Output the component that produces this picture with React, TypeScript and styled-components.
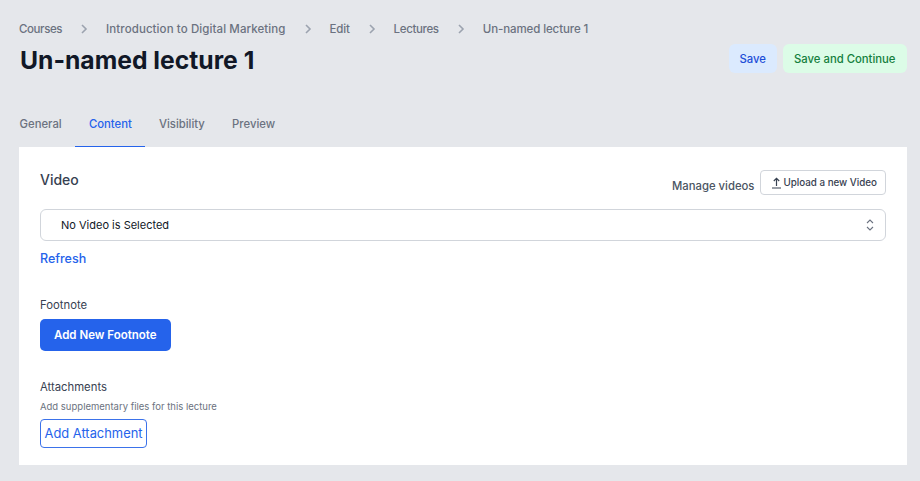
import React from 'react'
import styled, { createGlobalStyle } from 'styled-components'

const GlobalStyle = createGlobalStyle`
    html, body {
        margin: 0;
        padding: 0;
        background: #e5e7eb;
        font-family: Inter, "Noto Sans", sans-serif;
    }
    * { box-sizing: border-box; }
`

const Page = styled.div`
    width: 920px;
    height: 481px;
    overflow: hidden;
    padding: 20px 13px 0 19px;
    background: #e5e7eb;
`

const Header = styled.div`
    display: flex;
    justify-content: space-between;
    align-items: flex-start;
`

const Crumbs = styled.nav`
    display: flex;
    align-items: center;
    height: 17px;
    font-size: 11.5px;
    font-weight: 500;
    color: #6b7280;
`

const Crumb = styled.span<{ $track: number }>`
    white-space: nowrap;
    letter-spacing: ${p => p.$track}px;
`

const CrumbArrow = styled.svg`
    width: 10px;
    height: 10px;
    margin: 0 17px;
    fill: none;
    stroke: #9ca3af;
    stroke-width: 1.6;
`

const Title = styled.h1`
    margin: 7px 0 0 1px;
    font-size: 24.7px;
    line-height: 32px;
    font-weight: 700;
    color: #111827;
`

const Actions = styled.div`
    display: flex;
    gap: 6px;
    margin-top: 24px;
`

const ActionButton = styled.button<{ $tone: 'blue' | 'green' }>`
    height: 29px;
    padding: 0 ${p => (p.$tone === 'blue' ? '10.5px' : '11.5px')};
    border: 0;
    border-radius: 6px;
    font: 500 11.3px Inter, sans-serif;
    background: ${p => (p.$tone === 'blue' ? '#dbeafe' : '#dcfce7')};
    color: ${p => (p.$tone === 'blue' ? '#1d4ed8' : '#15803d')};
`

const Tabs = styled.div`
    display: flex;
    margin-top: 26px;
    margin-left: -13px;
`

const Tab = styled.div<{ $active?: boolean }>`
    height: 45px;
    padding: 0 13.6px 1px;
    display: flex;
    align-items: center;
    font-size: 11.3px;
    font-weight: 500;
    color: ${p => (p.$active ? '#2563eb' : '#6b7280')};
    border-bottom: 1px solid ${p => (p.$active ? '#2563eb' : 'transparent')};
`

const Card = styled.section`
    height: 318px;
    padding: 23px 21px 0;
    background: #fff;
`

const VideoHead = styled.div`
    display: flex;
    justify-content: space-between;
    align-items: flex-start;
`

const CardHeading = styled.h2`
    margin: 0;
    font-size: 14px;
    line-height: 20px;
    font-weight: 500;
    color: #374151;
`

const Manage = styled.div`
    display: flex;
    align-items: center;
    gap: 6px;
`

const ManageLabel = styled.span`
    margin-top: 7px;
    font-size: 11.3px;
    font-weight: 500;
    color: #4b5563;
`

const UploadButton = styled.button`
    display: flex;
    align-items: center;
    height: 25px;
    padding: 0 8px 0 10px;
    gap: 1px;
    background: #fff;
    border: 1px solid #d1d5db;
    border-radius: 4px;
    font: 500 9.8px Inter, sans-serif;
    color: #374151;
`

const SelectBox = styled.div`
    display: flex;
    justify-content: space-between;
    align-items: center;
    height: 32px;
    margin-top: 14px;
    padding: 0 10px 0 20px;
    border: 1px solid #d1d5db;
    border-radius: 6px;
    font-size: 11px;
    color: #111827;
`

const RefreshLink = styled.a`
    display: block;
    margin-top: 9px;
    font-size: 12.5px;
    line-height: 18px;
    font-weight: 500;
    color: #2563eb;
`

const Label = styled.div<{ $top: number }>`
    margin-top: ${p => p.$top}px;
    font-size: 11.3px;
    line-height: 16px;
    color: #374151;
`

const PrimaryButton = styled.button`
    display: block;
    height: 32px;
    margin-top: 6px;
    padding: 0 14px;
    border: 0;
    border-radius: 5px;
    background: #2563eb;
    color: #fff;
    font: 600 11.5px Inter, sans-serif;
`

const Hint = styled.div`
    margin-top: 5px;
    font-size: 9.5px;
    line-height: 14px;
    color: #6b7280;
`

const OutlineButton = styled.button`
    display: block;
    height: 29px;
    margin-top: 5px;
    padding: 0 3.5px;
    background: #fff;
    border: 1px solid #3b72ea;
    border-radius: 4px;
    color: #2563eb;
    font: 400 12.9px Inter, sans-serif;
`

const crumbs = [
    { label: 'Courses', track: -0.4 },
    { label: 'Introduction to Digital Marketing', track: 0.09 },
    { label: 'Edit', track: -0.2 },
    { label: 'Lectures', track: -0.35 },
    { label: 'Un-named lecture 1', track: -0.1 },
]
const tabs = ['General', 'Content', 'Visibility', 'Preview']

const App: React.FunctionComponent = () => {
    return (
        <>
            <GlobalStyle />
            <Page>
                <Header>
                    <div>
                        <Crumbs>
                            {crumbs.map((item, index) => (
                                <React.Fragment key={item.label}>
                                    {index > 0 && (
                                        <CrumbArrow viewBox="0 0 10 10">
                                            <path d="M3 1l4 4-4 4" />
                                        </CrumbArrow>
                                    )}
                                    <Crumb $track={item.track}>{item.label}</Crumb>
                                </React.Fragment>
                            ))}
                        </Crumbs>
                        <Title>Un-named lecture 1</Title>
                    </div>
                    <Actions>
                        <ActionButton $tone="blue">Save</ActionButton>
                        <ActionButton $tone="green">Save and Continue</ActionButton>
                    </Actions>
                </Header>
                <Tabs>
                    {tabs.map(item => (
                        <Tab key={item} $active={item === 'Content'}>{item}</Tab>
                    ))}
                </Tabs>
                <Card>
                    <VideoHead>
                        <CardHeading>Video</CardHeading>
                        <Manage>
                            <ManageLabel>Manage videos</ManageLabel>
                            <UploadButton>
                                <svg width="11" height="12" viewBox="0 0 11 12" fill="none" stroke="#374151" strokeWidth="1.2">
                                    <path d="M5.5 9V1.5M2.8 4l2.7-2.7L8.2 4M1 11h9" />
                                </svg>
                                Upload a new Video
                            </UploadButton>
                        </Manage>
                    </VideoHead>
                    <SelectBox>
                        No Video is Selected
                        <svg width="10" height="14" viewBox="0 0 10 14" fill="none" stroke="#6b7280" strokeWidth="1.1">
                            <path d="M2 5l3-3 3 3M2 9l3 3 3-3" />
                        </svg>
                    </SelectBox>
                    <RefreshLink>Refresh</RefreshLink>
                    <Label $top={29}>Footnote</Label>
                    <PrimaryButton>Add New Footnote</PrimaryButton>
                    <Label $top={28}>Attachments</Label>
                    <Hint>Add supplementary files for this lecture</Hint>
                    <OutlineButton>Add Attachment</OutlineButton>
                </Card>
            </Page>
        </>
    )
}
export default App
